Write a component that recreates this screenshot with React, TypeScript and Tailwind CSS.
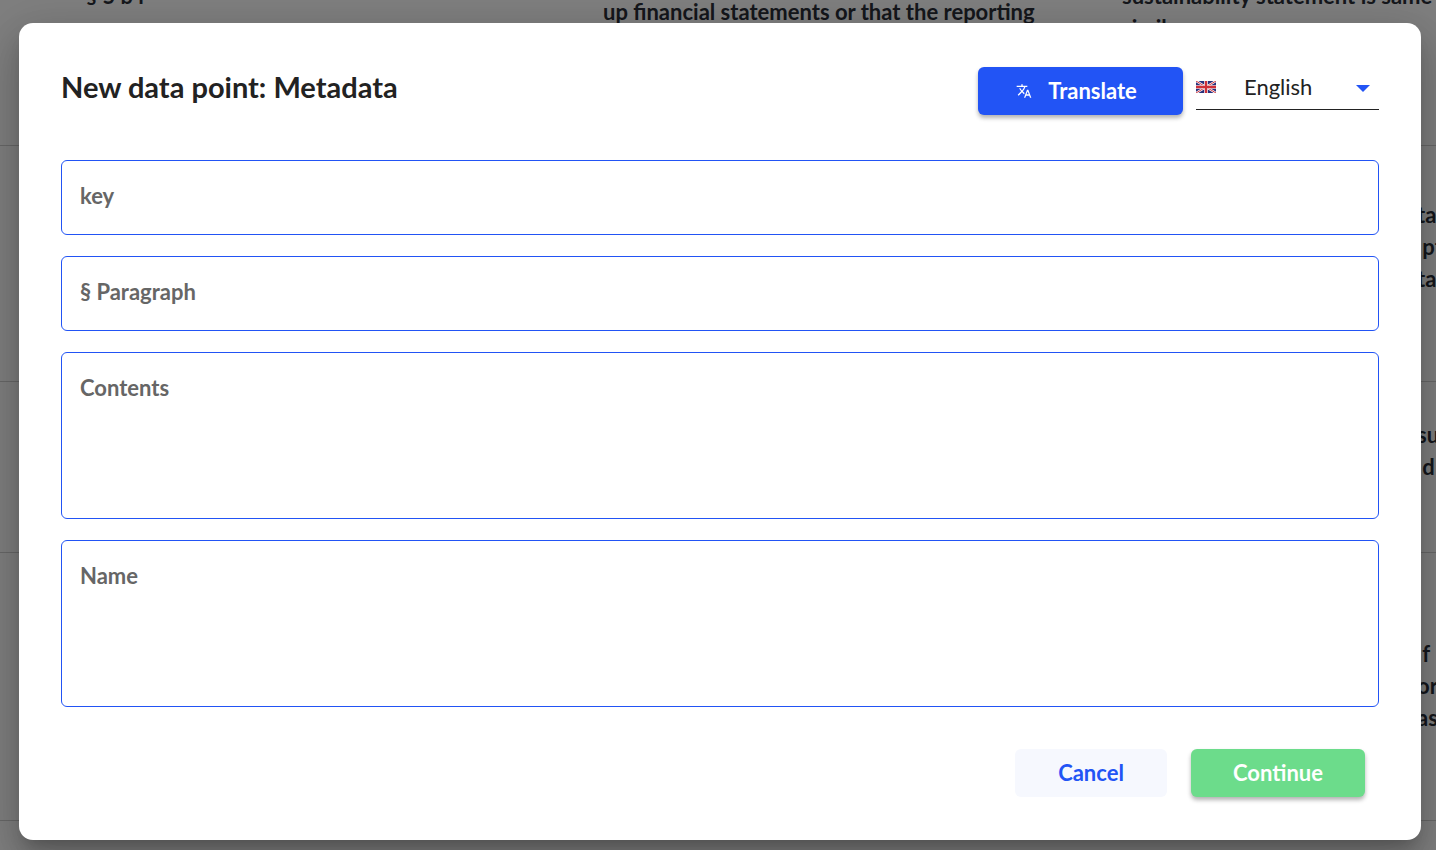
import { useState } from 'react';

interface TableRow {
  height: string;
  cells: string[][];
}

// The row being edited and its neighbours, seen behind the dialog
const rows: TableRow[] = [
  {
    height: 'h-[165px]',
    cells: [
      ['§ 5 b i'],
      ['up financial statements or that the reporting'],
      ['sustainability statement is same', 'similar'],
    ],
  },
  { height: 'h-[236px]', cells: [[], [], ['ta', '\u00a0pt', 'ta', '\u00a0']] },
  { height: 'h-[171px]', cells: [[], [], ['su', '\u00a0d', '\u00a0']] },
  { height: 'h-[268px]', cells: [[], [], ['\u00a0f', 'or', 'as']] },
  { height: 'h-[120px]', cells: [[], [], []] },
];

function DataPointTable() {
  return (
    <div className="absolute inset-0 overflow-hidden bg-white">
      <table className="-mt-5 w-full table-fixed border-collapse text-[22px] leading-8 font-bold whitespace-nowrap text-[#2b2f38]">
        <tbody>
          {rows.map((row, index) => (
            <tr key={index} className={`border-b border-[#d0d0d0] ${row.height}`}>
              {row.cells.map((lines, column) => (
                <td
                  key={column}
                  className={`p-0 ${index === 0 ? 'align-top' : 'align-middle'} ${
                    column === 0
                      ? 'w-[603px] pl-[86px]'
                      : column === 1
                        ? 'w-[519px] pt-4'
                        : index === 0
                          ? ''
                          : 'pl-[295px]'
                  }`}
                >
                  {lines.map((line, i) => (
                    <div key={i}>{line}</div>
                  ))}
                </td>
              ))}
            </tr>
          ))}
        </tbody>
      </table>
    </div>
  );
}

function TranslateIcon() {
  return (
    <svg viewBox="0 0 24 24" className="size-4" fill="currentColor" aria-hidden="true">
      <path d="m12.87 15.07-2.54-2.51.03-.03c1.74-1.94 2.98-4.17 3.71-6.53H17V4h-7V2H8v2H1v1.99h11.17C11.5 7.92 10.44 9.75 9 11.35 8.07 10.32 7.3 9.19 6.69 8h-2c.73 1.63 1.73 3.17 2.98 4.56l-5.09 5.02L4 19l5-5 3.11 3.11.76-2.04zM18.5 10h-2L12 22h2l1.12-3h4.75L21 22h2l-4.5-12zm-2.62 7 1.62-4.33L19.12 17h-3.24z" />
    </svg>
  );
}

function BritishFlag() {
  return (
    <svg viewBox="0 0 60 36" className="h-3 w-5" aria-hidden="true">
      <rect width="60" height="36" fill="#28307c" />
      <path d="M0 0l60 36M60 0L0 36" stroke="#fff" strokeWidth="7" />
      <path d="M0 0l60 36M60 0L0 36" stroke="#cf3a42" strokeWidth="3" />
      <path d="M30 0v36M0 18h60" stroke="#fff" strokeWidth="11" />
      <path d="M30 0v36M0 18h60" stroke="#cf2f38" strokeWidth="7" />
    </svg>
  );
}

const fieldClass =
  'block w-full resize-none rounded-md border border-[#2254f5] bg-white px-[18px] text-[22px] leading-8 font-bold text-[#222222] outline-none placeholder:text-[#666666] placeholder:opacity-100';

export default function App() {
  const [language, setLanguage] = useState('en');

  return (
    <div className="relative min-h-screen font-['Lato',sans-serif]">
      <DataPointTable />

      <div className="relative min-h-screen bg-black/50 pt-[23px] pr-[15px] pb-[10px] pl-[19px]">
        <form
          role="dialog"
          aria-labelledby="dialog-title"
          onSubmit={(e) => e.preventDefault()}
          className="rounded-[14px] bg-white p-[42px] pb-[43px] shadow-[0_11px_15px_-7px_rgba(0,0,0,0.2),0_24px_38px_3px_rgba(0,0,0,0.14),0_9px_46px_8px_rgba(0,0,0,0.12)]"
        >
          {/* Header */}
          <div className="flex items-start justify-between pt-0.5">
            <h1 id="dialog-title" className="text-[29px] leading-10 font-bold text-[#222222]">
              New data point: Metadata
            </h1>
            <div className="flex items-start gap-[13px]">
              <button
                type="button"
                className="flex h-12 w-[205px] items-center justify-center gap-4 rounded-md bg-[#2254f5] pr-2 text-[22px] font-bold text-white shadow-[0_3px_4px_rgba(0,0,0,0.3)]"
              >
                <TranslateIcon />
                <span className="pb-0.5">Translate</span>
              </button>
              <div className="relative w-[183px]">
                <span className="pointer-events-none absolute top-3.5 left-0">
                  <BritishFlag />
                </span>
                <select
                  aria-label="Language"
                  value={language}
                  onChange={(e) => setLanguage(e.target.value)}
                  className="block h-[43px] w-full appearance-none border-b border-[#222222] bg-transparent pb-1 pl-12 text-[22px] text-[#222222] outline-none"
                >
                  <option value="en">English</option>
                  <option value="de">Deutsch</option>
                </select>
                <svg
                  viewBox="0 0 14 7"
                  className="pointer-events-none absolute top-[18px] right-[9px] h-[7px] w-3.5"
                  fill="#2254f5"
                  aria-hidden="true"
                >
                  <path d="M0 0h14L7 7z" />
                </svg>
              </div>
            </div>
          </div>

          {/* Fields */}
          <div className="mt-[45px] flex flex-col gap-[21px]">
            <input type="text" aria-label="key" placeholder="key" className={`${fieldClass} h-[75px] pb-1`} />
            <input
              type="text"
              aria-label="§ Paragraph"
              placeholder="§ Paragraph"
              className={`${fieldClass} h-[75px] pb-1`}
            />
            <textarea aria-label="Contents" placeholder="Contents" className={`${fieldClass} h-[167px] pt-[19px]`} />
            <textarea aria-label="Name" placeholder="Name" className={`${fieldClass} h-[167px] pt-[19px]`} />
          </div>

          {/* Actions */}
          <div className="mt-[42px] flex justify-end gap-6 pr-3.5">
            <button
              type="button"
              className="h-12 w-[152px] rounded-md bg-[#f6f8fe] pb-0.5 text-[22px] font-bold text-[#2254f5]"
            >
              Cancel
            </button>
            <button
              type="submit"
              className="h-12 w-[174px] rounded-md bg-[#6cdc8b] pb-0.5 text-[22px] font-bold text-white shadow-[0_3px_4px_rgba(0,0,0,0.3)]"
            >
              Continue
            </button>
          </div>
        </form>
      </div>
    </div>
  );
}
